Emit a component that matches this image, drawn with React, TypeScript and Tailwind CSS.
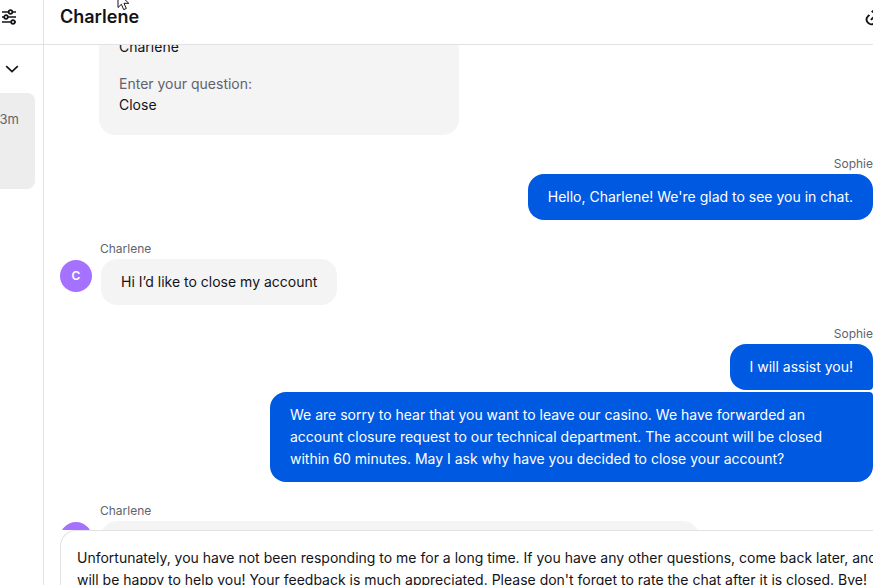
import type { ReactNode } from "react";

const DRAFT =
  "Unfortunately, you have not been responding to me for a long time. If you have any other questions, come back later, and we\nwill be happy to help you! Your feedback is much appreciated. Please don't forget to rate the chat after it is closed. Bye!";

function SlidersIcon() {
  return (
    <svg width="16" height="16" viewBox="0 0 16 16" fill="none" stroke="#131317" strokeWidth="1.7">
      <path d="M1 3h6.5M11.5 3H15M1 8h2M7 8h8M1 13h9M14 13h1" />
      <circle cx="9.5" cy="3" r="1.8" />
      <circle cx="5" cy="8" r="1.8" />
      <circle cx="12" cy="13" r="1.8" />
    </svg>
  );
}

function ChevronIcon() {
  return (
    <svg width="14" height="8" viewBox="0 0 14 8" fill="none" stroke="#131317" strokeWidth="1.7">
      <path d="M1.2 1.2 7 6.6l5.8-5.4" />
    </svg>
  );
}

function LinkIcon() {
  return (
    <svg width="18" height="18" viewBox="0 0 16 16" fill="none" stroke="#131317" strokeWidth="1.7">
      <path d="M6 3.8 7.6 2.3a3.6 3.6 0 0 1 5.1 0l.8.8a3.6 3.6 0 0 1 0 5.1L12 9.8" />
      <path d="M3.9 6.1 2.4 7.7a3.6 3.6 0 0 0 0 5.1l.7.7a3.6 3.6 0 0 0 5.1 0L9.8 12" />
      <path d="m5.2 10.6 5.6-5.4" />
    </svg>
  );
}

function Avatar() {
  return (
    <div className="mt-px flex size-8 shrink-0 items-center justify-center rounded-full bg-[#a472ff] text-xs font-semibold text-white">
      C
    </div>
  );
}

function Outgoing({ children }: { children: ReactNode }) {
  return (
    <section>
      <h2 className="text-right text-xs leading-[21px] text-[#62626d]">Sophie</h2>
      <div className="flex flex-col items-end gap-0.5 leading-[22px] text-white">{children}</div>
    </section>
  );
}

function Incoming({ children }: { children: ReactNode }) {
  return (
    <section className="pl-4">
      <h2 className="pl-10 text-xs leading-[21px] text-[#62626d]">Charlene</h2>
      <div className="flex items-start gap-[9px]">
        <Avatar />
        {children}
      </div>
    </section>
  );
}

export default function App() {
  return (
    <div className="relative flex h-screen overflow-hidden bg-white font-['Inter',sans-serif] text-sm text-[#131317]">
      {/* Chat list */}
      <aside className="w-11 shrink-0 border-r border-[#e2e2e4]">
        <div className="flex h-[45px] items-center border-b border-[#e2e2e4] pb-2.5">
          <button type="button" aria-label="Filters" className="pl-px">
            <SlidersIcon />
          </button>
        </div>
        <button type="button" aria-label="Sort chats" className="flex h-12 w-full items-center pl-[5px]">
          <ChevronIcon />
        </button>
        <a href="#chat" className="flex h-24 w-[35px] justify-end rounded-r-lg bg-[#ededed] pt-4 pr-4 text-[13px] leading-5 text-[#62626d]">
          3m
        </a>
      </aside>

      <main className="flex min-w-0 flex-1 flex-col">
        <header className="flex h-[45px] shrink-0 items-center justify-between overflow-hidden border-b border-[#e2e2e4] pb-2.5 pl-4">
          <h1 className="text-lg font-semibold">Charlene</h1>
          <button type="button" aria-label="Copy link" className="-mr-2.5">
            <LinkIcon />
          </button>
        </header>

        {/* Messages */}
        <div className="flex min-h-0 flex-1 flex-col gap-[18px] overflow-hidden">
          <dl className="-mt-[9px] ml-[55px] w-[360px] max-w-full rounded-b-2xl bg-[#f4f4f4] px-5 pb-5 leading-[21px]">
            <dd className="mb-4">Charlene</dd>
            <dt className="text-[#62626d]">Enter your question:</dt>
            <dd>Close</dd>
          </dl>

          <Outgoing>
            <p className="rounded-2xl bg-[#0059e1] px-5 py-3">Hello, Charlene! We're glad to see you in chat.</p>
          </Outgoing>

          <Incoming>
            <p className="rounded-2xl bg-[#f4f4f4] px-5 py-3 leading-[22px]">Hi I’d like to close my account</p>
          </Incoming>

          <Outgoing>
            <p className="rounded-2xl rounded-br-sm bg-[#0059e1] px-5 py-3">I will assist you!</p>
            <p className="max-w-[603px] rounded-2xl rounded-tr-sm bg-[#0059e1] px-5 py-3">
              We are sorry to hear that you want to leave our casino. We have forwarded an account closure request to
              our technical department. The account will be closed within 60 minutes. May I ask why have you decided to
              close your account?
            </p>
          </Outgoing>

          <Incoming>
            <div className="h-12 w-[598px] rounded-2xl bg-[#f4f4f4]" />
          </Incoming>
        </div>

        {/* Reply box */}
        <div className="h-[55px] shrink-0 overflow-hidden pl-4">
          <div className="w-[calc(100%+80px)] rounded-tl-2xl border-t border-l border-[#e2e2e4] pt-4 pl-4">
            <textarea
              aria-label="Reply"
              wrap="off"
              rows={3}
              defaultValue={DRAFT}
              className="block w-full resize-none overflow-hidden leading-[22px] outline-none"
            />
          </div>
        </div>
      </main>

      {/* Mouse pointer */}
      <svg className="absolute -top-2 left-[117px]" width="13" height="19" viewBox="0 0 13 19">
        <path d="M1 1v14.5l3.4-3.2 2.3 5.3 2.6-1.1-2.3-5.2h4.8z" fill="#fff" stroke="#131317" />
      </svg>
    </div>
  );
}
